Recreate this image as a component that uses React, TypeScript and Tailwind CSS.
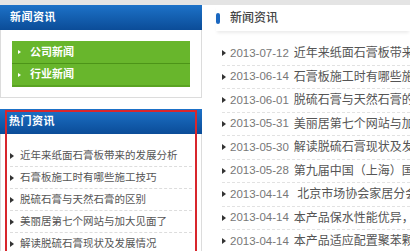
const hot = [
  '近年来纸面石膏板带来的发展分析',
  '石膏板施工时有哪些施工技巧',
  '脱硫石膏与天然石膏的区别',
  '美丽居第七个网站与加大见面了',
  '解读脱硫石膏现状及发展情况',
];

const news = [
  ['2013-07-12', '近年来纸面石膏板带来的发展分析'],
  ['2013-06-14', '石膏板施工时有哪些施工技巧'],
  ['2013-06-01', '脱硫石膏与天然石膏的区别'],
  ['2013-05-31', '美丽居第七个网站与加大见面了'],
  ['2013-05-30', '解读脱硫石膏现状及发展情况'],
  ['2013-05-28', '第九届中国（上海）国际石膏展'],
  ['2013-04-14', '\u00a0北京市场协会家居分会成立'],
  ['2013-04-14', '本产品保水性能优异，施工方便'],
  ['2013-04-14', '本产品适应配置聚苯颗粒保温'],
];

const cjk = "font-['Liberation_Sans','Noto_Sans_CJK_SC',sans-serif]";

function Arrow() {
  return <span className="inline-block w-0 h-0 border-y-[3px] border-y-transparent border-l-[4px] border-l-[#333]" />;
}

export default function App() {
  return (
    <div className={`w-[410px] h-[251px] overflow-hidden bg-white relative ${cjk}`}>
      <div className="h-[5px] bg-[#e4e4e4]" />
      <div className="flex">
        {/* left column */}
        <div className="w-[202px] shrink-0">
          <div className="h-[25px] bg-gradient-to-b from-[#1d72c8] to-[#0b4c98] flex items-center pl-[10px]">
            <span className="text-white text-[11px] font-bold tracking-[0.5px]">新闻资讯</span>
          </div>
          <div className="h-[68px] border border-t-0 border-[#dcdcdc] pt-[11px] px-[11px]">
            {['公司新闻', '行业新闻'].map((t, i) => (
              <div
                key={t}
                className={`h-[23px] bg-[#68b62c] flex items-center pl-[6px] gap-[9px] ${i === 0 ? 'border-b border-[#4c9418]' : 'border-b-2 border-[#5aa322]'}`}
              >
                <span className="inline-block w-0 h-0 border-y-[2px] border-y-transparent border-l-[3px] border-l-white" />
                <span className="text-white text-[11px] font-bold">{t}</span>
              </div>
            ))}
          </div>
          <div className="h-[11px]" />
          <div className="h-[25px] bg-gradient-to-b from-[#1d72c8] to-[#0b4c98] flex items-center pl-[9px]">
            <span className="text-white text-[11px] font-bold tracking-[0.5px]">热门资讯</span>
          </div>
          <div className="border-x border-[#dcdcdc] pt-[11px] px-[9px] h-[200px]">
            {hot.map((t) => (
              <div key={t} className="h-[22px] flex items-center gap-[6px] border-b border-dashed border-[#ddd]">
                <Arrow />
                <span className="text-[10.5px] text-[#555] whitespace-nowrap">{t}</span>
              </div>
            ))}
          </div>
        </div>

        {/* right column */}
        <div className="flex-1 pl-[14px] min-w-0">
          <div className="h-[26px] flex items-center gap-[10px] shadow-[0_3px_3px_-1px_rgba(0,0,0,0.08)]">
            <span className="w-[4px] h-[11px] rounded-[2px] bg-[#1a67c0]" />
            <span className="text-[12px] font-medium text-[#444]">新闻资讯</span>
          </div>
          <div className="pt-[11px] pl-[6px]">
            {news.map(([d, t], i) => (
              <div
                key={i}
                className="h-[23.5px] flex items-center border-b border-dashed border-[#e2e2e2] whitespace-nowrap"
              >
                <Arrow />
                <span className="ml-[4px] text-[11.5px] text-[#777] w-[64px]">{d}</span>
                <span className="w-px h-[14px] bg-[#ddd]" />
                <span className="ml-[5px] text-[12px] text-[#555]">{t}</span>
              </div>
            ))}
          </div>
        </div>
      </div>

      {/* annotation box */}
      <div className="absolute left-[5px] top-[110px] w-[192px] h-[160px] border-2 border-[#d8262c] pointer-events-none" />
    </div>
  );
}
